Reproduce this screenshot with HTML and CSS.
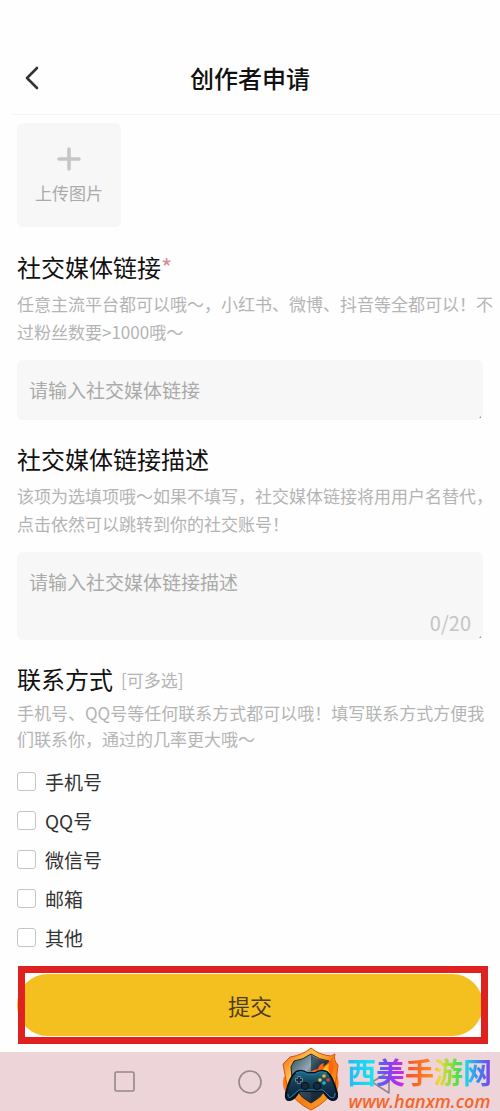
FILE: index.html
```html
<!DOCTYPE html>
<html lang="zh-CN">
<head>
<meta charset="utf-8">
<meta name="viewport" content="width=device-width, initial-scale=1">
<title>创作者申请</title>
<link rel="stylesheet" href="styles.css">
</head>
<body>
<header class="header">
  <button class="back" type="button" aria-label="返回">
    <svg width="14" height="24" viewBox="0 0 14 24" fill="none" stroke="#333" stroke-width="2.6" stroke-linecap="round" stroke-linejoin="round"><path d="M12 2 2 12l10 10"/></svg>
  </button>
  <h1 class="title">创作者申请</h1>
</header>

<main class="main">
  <form class="form">
    <button class="upload" type="button">
      <svg width="24" height="24" viewBox="0 0 24 24" stroke="#c6c6c6" stroke-width="3.6" stroke-linecap="round"><path d="M12 2v20M2 12h20"/></svg>
      <span>上传图片</span>
    </button>

    <section class="field">
      <label class="heading" for="link">社交媒体链接<span class="required">*</span></label>
      <p class="hint">任意主流平台都可以哦～，小红书、微博、抖音等全都可以！不过粉丝数要&gt;1000哦～</p>
      <div class="box">
        <textarea class="input" id="link" rows="1" placeholder="请输入社交媒体链接"></textarea>
      </div>
    </section>

    <section class="field">
      <label class="heading" for="desc">社交媒体链接描述</label>
      <p class="hint">该项为选填项哦～如果不填写，社交媒体链接将用用户名替代，点击依然可以跳转到你的社交账号！</p>
      <div class="box">
        <textarea class="input" id="desc" rows="1" maxlength="20" placeholder="请输入社交媒体链接描述"></textarea>
        <span class="count">0/20</span>
      </div>
    </section>

    <fieldset class="contacts">
      <legend class="heading">联系方式<span class="optional">[可多选]</span></legend>
      <p class="hint hint-tight">手机号、QQ号等任何联系方式都可以哦！填写联系方式方便我们联系你，通过的几率更大哦～</p>
      <label class="option"><input class="check" type="checkbox">手机号</label>
      <label class="option"><input class="check" type="checkbox">QQ号</label>
      <label class="option"><input class="check" type="checkbox">微信号</label>
      <label class="option"><input class="check" type="checkbox">邮箱</label>
      <label class="option"><input class="check" type="checkbox">其他</label>
    </fieldset>

    <div class="submit-area">
      <button class="submit" type="submit">提交</button>
    </div>
  </form>
</main>

<footer class="navbar">
  <button class="nav" type="button" aria-label="最近任务">
    <svg width="24" height="24" viewBox="0 0 24 24" fill="none" stroke="#94868c" stroke-width="1.6"><rect x="2" y="2" width="19" height="19" rx="1.5"/></svg>
  </button>
  <button class="nav" type="button" aria-label="主屏幕">
    <svg width="24" height="24" viewBox="0 0 24 24" fill="none" stroke="#94868c" stroke-width="1.6"><circle cx="12" cy="12" r="11"/></svg>
  </button>
  <button class="nav" type="button" aria-label="返回">
    <svg width="30" height="24" viewBox="0 0 30 24" fill="none" stroke="#94868c" stroke-width="1.6" stroke-linejoin="round"><path d="M29 2v21L12 12z"/></svg>
  </button>

  <div class="brand">
    <svg class="shield" width="58" height="64" viewBox="0 0 58 64">
      <defs>
        <linearGradient id="rim" x1="0" y1="0" x2="1" y2="1"><stop offset="0" stop-color="#f05a10"/><stop offset=".3" stop-color="#ffc24a"/><stop offset=".6" stop-color="#f47a10"/><stop offset="1" stop-color="#ffb733"/></linearGradient>
        <linearGradient id="steel" x1="0" y1="0" x2="1" y2="1"><stop offset="0" stop-color="#294652"/><stop offset=".35" stop-color="#91a9b4"/><stop offset=".5" stop-color="#344b5b"/><stop offset="1" stop-color="#101b2a"/></linearGradient>
        <linearGradient id="pad" x1="0" y1="0" x2="0" y2="1"><stop offset="0" stop-color="#1e7091"/><stop offset=".4" stop-color="#153e55"/><stop offset="1" stop-color="#0b1b31"/></linearGradient>
      </defs>
      <path d="M5 47Q-1 40 2 29L7 36 52 34Q55 29 54 24Q60 39 52 50L45 47 38 57 18 55Z" fill="#ff7814"/>
      <path d="M29 1Q37 8 49 9L53 7Q51 13 56 18Q55 29 53 38Q48 54 29 63Q10 54 5 38L1 17L8 10Q21 8 29 1Z" fill="url(#rim)" stroke="#d8500f" stroke-width="1"/>
      <path d="M29 7Q37 13 47 14L49 20Q49 46 29 56Q9 46 9 20L12 14Q21 13 29 7Z" fill="url(#steel)" stroke="#192733" stroke-width="1"/>
      <path d="M29 8v47Q48 45 48 20L46 15Q36 13 29 8Z" fill="#122435" opacity=".6"/>
      <path d="M24 29Q29 23 36 22Q37 17 42 16L41 20Q48 15 51 9Q50 16 52 20L49 30Z" fill="#ff6510"/>
      <path d="M31 29Q36 24 40 24Q43 19 47 17Q45 23 49 28Z" fill="#ffc327"/>
      <path d="M14 25Q20 22 25 26H33Q38 22 45 25Q50 28 55 46Q56 54 50 53Q46 52 41 44H17Q13 52 8 53Q3 54 4 46Q8 29 14 25Z" fill="url(#pad)" stroke="#08121f" stroke-width="2"/>
      <path d="M14 26Q20 23 25 27H33Q38 23 45 26M6 47Q6 53 10 49L17 43H41L48 50Q53 53 53 46" fill="none" stroke="#2688b6" stroke-width="1"/>
      <path d="M17 29v8M13 33h8" stroke="#6d8997" stroke-width="3.4"/>
      <path d="M17 30v6M14 33h6" stroke="#14283a" stroke-width="2"/>
      <circle cx="23" cy="39" r="3.6" fill="#142b3d" stroke="#06101c"/>
      <circle cx="35" cy="39" r="3.6" fill="#142b3d" stroke="#06101c"/>
      <circle cx="42" cy="29" r="1.8" fill="#ffb12b"/>
      <circle cx="46" cy="33" r="1.8" fill="#f13a28"/>
      <circle cx="42" cy="36" r="1.8" fill="#25b5dc"/>
      <circle cx="38" cy="33" r="1.8" fill="#e9c938"/>
    </svg>
    <div class="brand-text">
      <span class="brand-name">西美手游网</span>
      <span class="brand-url">www.hanxm.com</span>
    </div>
  </div>
</footer>
</body>
</html>
```
FILE: styles.css
```css
* { box-sizing: border-box; }

body {
  margin: 0;
  min-height: 100vh;
  display: flex;
  flex-direction: column;
  background: #fefefe;
  color: #111;
  font-family: "Noto Sans CJK SC", sans-serif;
}

button, textarea { font-family: inherit; }
button { border: 0; padding: 0; background: none; }

.header {
  display: grid;
  grid-template-columns: 48px 1fr 60px;
  align-items: center;
  height: 115px;
  padding-top: 42px;
  margin-left: 12px;
  border-bottom: 1px solid #f4f4f4;
}
.back { display: flex; padding-left: 13px; }
.title {
  margin: 0;
  font-size: 24px;
  line-height: 36px;
  font-weight: 500;
  text-align: center;
}

.main { flex: 1; padding: 8px 17px 16px; }
.form { display: flex; flex-direction: column; }

.upload {
  display: flex;
  flex-direction: column;
  align-items: center;
  justify-content: center;
  gap: 10px;
  width: 104px;
  height: 104px;
  padding-top: 2px;
  margin-bottom: 22px;
  border-radius: 6px;
  background: #f7f7f7;
  color: #aaa;
  font-size: 17px;
  line-height: 24px;
}

.field { margin-bottom: 21px; }
.heading {
  display: block;
  padding: 0;
  font-size: 24px;
  line-height: 36px;
}
.required { color: #d58e98; }
.optional {
  display: inline-block;
  margin-left: 8px;
  color: #b4b4b4;
  font-size: 17px;
  line-height: 24px;
  vertical-align: 2px;
}
.hint {
  margin: 5px -10px 14px 0;
  color: #b4b4b4;
  font-size: 17px;
  line-height: 28px;
}
.hint-tight { margin-top: 3px; margin-bottom: 10px; line-height: 26px; }

.box {
  position: relative;
  display: flex;
  flex-direction: column;
  padding: 15px 12px;
  border-radius: 6px;
  background: #f7f7f7;
}
.box::after {
  content: "";
  position: absolute;
  right: 2px;
  bottom: 2px;
  border: 1px solid #999;
  border-top-color: transparent;
  border-left-color: transparent;
}
.input {
  width: 100%;
  height: 30px;
  padding: 0;
  border: 0;
  outline: 0;
  resize: none;
  overflow: hidden;
  background: transparent;
  color: #333;
  font-size: 19px;
  line-height: 30px;
}
.input::placeholder { color: #aaa; opacity: 1; }
.count {
  align-self: flex-end;
  margin: 12px 0 -11px;
  color: #c4c4c4;
  font-size: 20px;
  line-height: 27px;
}

.contacts { min-width: 0; margin: 0; padding: 0; border: 0; }
.option {
  display: flex;
  align-items: center;
  gap: 9px;
  height: 39px;
  color: #333;
  font-size: 19px;
}
.check {
  appearance: none;
  width: 19px;
  height: 19px;
  margin: 0;
  border: 1px solid #c4c4c4;
  border-radius: 3px;
  background: #fff;
}
.check:checked { background: #f3c020; }

.submit-area { position: relative; display: flex; margin-top: 17px; }
.submit {
  flex: 1;
  height: 62px;
  border-radius: 31px;
  background: #f3c020;
  color: #4d3c16;
  font-size: 22px;
}
.submit-area::after {
  content: "";
  position: absolute;
  inset: -8px -5px -8px 1px;
  border: 7px solid #df211f;
  pointer-events: none;
}

.navbar {
  position: relative;
  display: grid;
  grid-template-columns: repeat(3, 1fr);
  height: 59px;
  padding: 0 62px;
  background: #edd4d9;
}
.nav { display: flex; align-items: center; justify-content: center; }

.brand {
  position: absolute;
  right: 8px;
  bottom: 0;
  display: flex;
  align-items: flex-end;
  gap: 7px;
}
.brand-text {
  display: flex;
  flex-direction: column;
  align-items: center;
  gap: 2px;
}
.brand-name {
  font-size: 29px;
  line-height: 36px;
  font-weight: 700;
  color: transparent;
  background: linear-gradient(90deg, #20b9f5 0, #18e4f0 18%, #4a6ef5 21%, #8a3df0 30%, #d22be2 39%, #f6552a 42%, #ff8a1c 59%, #f5d83a 63%, #55e040 76%, #25d4e9 82%, #3986f4 91%, #8b37e5 100%);
  background-clip: text;
  -webkit-background-clip: text;
}
.brand-url {
  color: #f4662a;
  font-family: "Open Sans", sans-serif;
  font-size: 18px;
  line-height: 20px;
  font-weight: 600;
  font-style: italic;
}
```
